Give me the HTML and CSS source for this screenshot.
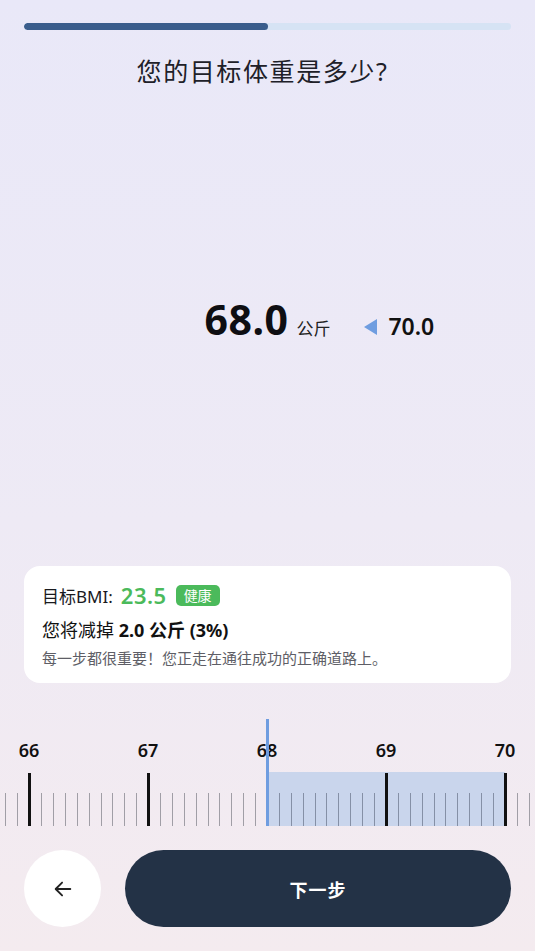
FILE: index.html
```html
<!DOCTYPE html>
<html lang="zh">
<head>
<meta charset="utf-8">
<title>目标体重</title>
<link rel="stylesheet" href="styles.css">
</head>
<body>
<div class="screen">
  <div class="progress"><div class="progress-fill" style="width:50%"></div></div>
  <h1 class="title">您的目标体重是多少?</h1>

  <div class="value-area">
    <div class="value-row">
      <div class="side"></div>
      <div class="current"><span class="num">68.0</span><span class="unit">公斤</span></div>
      <div class="side prev">
        <svg class="tri" width="14" height="16" viewBox="0 0 14 16"><path d="M0 8 L13 0 L13 16 Z" fill="#6f9de0"/></svg>
        <span class="prev-num">70.0</span>
      </div>
    </div>
  </div>

  <div class="card">
    <div class="bmi-line">
      <span>目标BMI:</span><span class="bmi">23.5</span><span class="badge">健康</span>
    </div>
    <div class="lose-line">您将减掉 <b>2.0 公斤 (3%)</b></div>
    <div class="hint">每一步都很重要！您正走在通往成功的正确道路上。</div>
  </div>

  <div class="ruler">
    <div class="ruler-labels">
      <span>66</span><span>67</span><span>68</span><span>69</span><span>70</span>
    </div>
    <div class="ruler-ticks">
      <i class="t"></i><i class="t"></i><i class="t major"></i><i class="t"></i><i class="t"></i><i class="t"></i><i class="t"></i><i class="t"></i><i class="t"></i><i class="t"></i><i class="t"></i><i class="t"></i>
      <i class="t major"></i><i class="t"></i><i class="t"></i><i class="t"></i><i class="t"></i><i class="t"></i><i class="t"></i><i class="t"></i><i class="t"></i><i class="t"></i>
      <i class="t major hidden"></i><i class="t in"></i><i class="t in"></i><i class="t in"></i><i class="t in"></i><i class="t in"></i><i class="t in"></i><i class="t in"></i><i class="t in"></i><i class="t in"></i>
      <i class="t major"></i><i class="t in"></i><i class="t in"></i><i class="t in"></i><i class="t in"></i><i class="t in"></i><i class="t in"></i><i class="t in"></i><i class="t in"></i><i class="t in"></i>
      <i class="t major"></i><i class="t"></i><i class="t"></i>
    </div>
    <div class="ruler-range" style="left:267px;width:238px"></div>
    <div class="ruler-pointer" style="left:265.5px"></div>
  </div>

  <div class="actions">
    <button class="back" aria-label="返回">
      <svg width="22" height="22" viewBox="0 0 24 24" fill="none" stroke="#222" stroke-width="2" stroke-linecap="round" stroke-linejoin="round"><path d="M20 12H4.5"/><path d="M11 5l-7 7 7 7"/></svg>
    </button>
    <button class="next">下一步</button>
  </div>
</div>
</body>
</html>
```

FILE: styles.css
```css
* { box-sizing: border-box; }
html, body { margin: 0; padding: 0; }
body {
  font-family: "Noto Sans", "Noto Sans CJK SC", sans-serif;
  color: #1c1c22;
  background: linear-gradient(to bottom, #e9e8f8 0%, #eeeaf5 55%, #f4ebef 100%);
}
.screen {
  width: 535px;
  height: 951px;
  display: flex;
  flex-direction: column;
  overflow: hidden;
}
.progress {
  margin: 23px 24px 0;
  height: 7px;
  border-radius: 4px;
  background: #d6e3f4;
  overflow: hidden;
}
.progress-fill {
  height: 100%;
  border-radius: 4px;
  background: #3a5d8c;
}
.title {
  margin: 25px 0 0;
  padding-right: 10px;
  height: 33px;
  font-size: 25px;
  line-height: 33px;
  font-weight: 400;
  letter-spacing: 1.6px;
  text-align: center;
  color: #202028;
}
.value-area {
  flex: 1;
  display: flex;
  align-items: center;
  padding-bottom: 16px;
}
.value-row {
  width: 100%;
  display: grid;
  grid-template-columns: 1fr auto 1fr;
  align-items: baseline;
}
.current { display: flex; align-items: baseline; }
.num {
  font-size: 41px;
  font-weight: 700;
  color: #0e0e12;
  letter-spacing: 0.5px;
}
.unit {
  margin-left: 8px;
  font-size: 17px;
  color: #222;
}
.prev {
  display: flex;
  align-items: baseline;
  padding-left: 34px;
}
.tri { align-self: center; margin-top: 2px; }
.prev-num {
  margin-left: 10px;
  font-size: 23px;
  font-weight: 600;
  color: #111;
}
.card {
  margin: 0 24px;
  height: 117px;
  background: #fff;
  border-radius: 16px;
  padding: 15px 18px 0;
}
.bmi-line {
  display: flex;
  align-items: center;
  height: 28px;
  font-size: 17px;
  color: #1a1a1e;
}
.bmi {
  margin-left: 8px;
  font-size: 22px;
  font-weight: 600;
  color: #4bba5b;
  letter-spacing: 0.5px;
}
.badge {
  margin-left: 9px;
  height: 21px;
  padding: 0 8px;
  border-radius: 5px;
  background: #4bba5b;
  color: #fff;
  font-size: 14px;
  line-height: 21px;
}
.lose-line {
  margin-top: 8px;
  height: 26px;
  font-size: 18px;
  line-height: 26px;
  color: #111;
}
.lose-line b { font-weight: 700; }
.hint {
  margin-top: 5px;
  font-size: 15px;
  line-height: 20px;
  color: #5e5e66;
}
.ruler {
  position: relative;
  margin-top: 36px;
  height: 107px;
}
.ruler-labels {
  display: flex;
  margin-top: 19px;
  margin-left: -30.5px;
  height: 24px;
}
.ruler-labels span {
  flex: 0 0 119px;
  text-align: center;
  font-size: 18px;
  line-height: 24px;
  font-weight: 600;
  color: #111;
}
.ruler-ticks {
  position: relative;
  z-index: 2;
  display: flex;
  align-items: flex-end;
  margin-top: 11px;
  margin-left: 0px;
  height: 53px;
}
.t {
  flex: 0 0 11.9px;
  display: flex;
  justify-content: center;
  align-items: flex-end;
  height: 53px;
}
.t::before {
  content: "";
  width: 1px;
  height: 33px;
  background: #a09ea6;
}
.t.in::before { background: #8590a6; }
.t.major::before {
  width: 3px;
  height: 53px;
  background: #111;
}
.t.hidden::before { background: transparent; }
.ruler-range {
  position: absolute;
  z-index: 1;
  top: 53px;
  height: 54px;
  background: #c9d5ec;
}
.ruler-pointer {
  position: absolute;
  z-index: 3;
  top: 0;
  width: 3px;
  height: 107px;
  background: #6f9de0;
}
.actions {
  display: flex;
  gap: 24px;
  margin: 24px 24px 24px;
  height: 77px;
}
.back {
  flex: 0 0 77px;
  height: 77px;
  border: 0;
  border-radius: 50%;
  background: #fff;
  display: flex;
  align-items: center;
  justify-content: center;
  padding: 0;
}
.next {
  flex: 1;
  height: 77px;
  border: 0;
  border-radius: 39px;
  background: #233246;
  color: #fff;
  font-family: "Noto Sans", "Noto Sans CJK SC", sans-serif;
  font-size: 18px;
  font-weight: 700;
  letter-spacing: 1px;
}
```
